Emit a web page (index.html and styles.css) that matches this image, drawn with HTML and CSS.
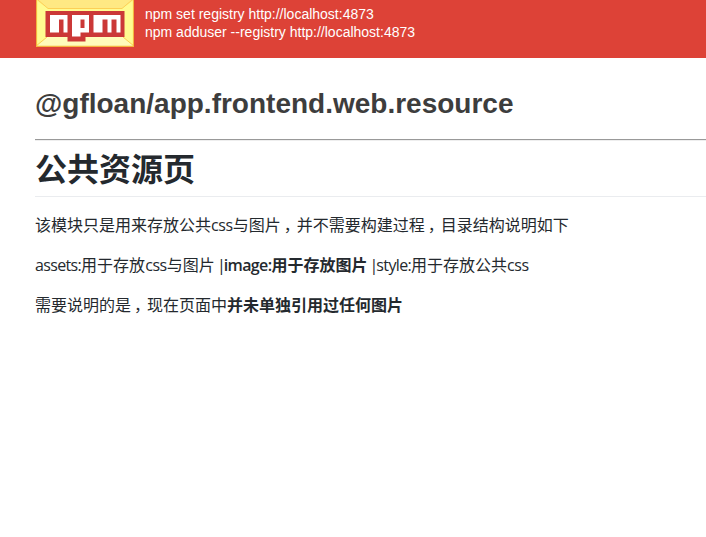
FILE: index.html
```html
<!DOCTYPE html>
<html lang="zh-CN">
<head>
<meta charset="utf-8">
<title>@gfloan/app.frontend.web.resource</title>
<link rel="stylesheet" href="styles.css">
</head>
<body>
<header class="header">
  <svg class="logo" width="98" height="47" viewBox="0 0 98 47" aria-label="npm">
    <rect width="98" height="47" fill="#fffb91"/>
    <path d="M0 0H98L86 8.500H12Z" fill="#ffe983"/>
    <path d="M11 37H87L98 47H0Z" fill="#fffcba"/>
    <path d="M2 0L12 8.500H86L96 0M11 37L0 46M87 37L98 46" fill="none" stroke="#fdd056" stroke-width="1"/>
    <path d="M.5 0V46.300H97.500V0" fill="none" stroke="#f4b53f" stroke-width="1.200"/>
    <path d="M9.500 11H88.500V37H49.500V41.500H31.500V37H9.500Z" fill="#cb3837"/>
    <path fill="#fff" fill-rule="evenodd" d="M14 15H31.500V32.500H27.500V19.500H23V32.500H14ZM36 15H53V32.500H44.500V36.500H36ZM44.500 19.500V28H48.500V19.500ZM57.500 15H84.500V32.500H80.500V19.500H75.500V32.500H71.500V19.500H66.500V32.500H57.500Z"/>
  </svg>
  <div class="commands">
    <div>npm set registry http://localhost:4873</div>
    <div>npm adduser --registry http://localhost:4873</div>
  </div>
</header>
<main class="content">
  <h1 class="package">@gfloan/app.frontend.web.resource</h1>
  <hr class="rule">
  <article class="readme">
    <h1 class="title">公共资源页</h1>
    <p>该模块只是用来存放公共<span class="latin">css</span>与图片<span class="comma">，</span>并不需要构建过程<span class="comma">，</span>目录结构说明如下</p>
    <p><span class="label">assets:</span>用于存放<span class="latin">css</span>与图片<span class="bar"> |</span><strong><span class="label">image:</span>用于存放图片</strong><span class="bar"> |</span><span class="label">style:</span>用于存放公共<span class="latin">css</span></p>
    <p>需要说明的是<span class="comma">，</span>现在页面中<strong>并未单独引用过任何图片</strong></p>
  </article>
</main>
</body>
</html>
```
FILE: styles.css
```css
body {
  margin: 0;
  background: #fff;
  overflow: hidden;
}

.header {
  display: flex;
  height: 58px;
  padding-left: 36px;
  box-sizing: border-box;
  background: #dd4237;
}

.logo {
  flex: none;
}

.commands {
  margin: 5px 0 0 11px;
  color: #fff;
  font: 14px/18px "Liberation Sans", Arial, sans-serif;
  white-space: nowrap;
}

.content {
  padding: 29px 0 0 35px;
}

.package {
  margin: 0;
  color: #3d3d3d;
  font: bold 28px/34px "Liberation Sans", Arial, sans-serif;
}

.rule {
  height: 0;
  margin: 18px 0 0;
  border: 0;
  border-top: 1px solid #999;
  border-bottom: 1px solid #eee;
}

.readme {
  color: #24292e;
  font: 16px/24px "Open Sans", "Noto Sans CJK SC", sans-serif;
  white-space: nowrap;
}

.title {
  margin: 0 0 16px;
  padding: 4px 0 3px;
  border-bottom: 1px solid #eaecef;
  font-size: 32px;
  font-weight: bold;
  line-height: 48px;
}

.readme p {
  margin: 0 0 16px;
}

.readme strong {
  font-weight: 600;
}

.latin {
  letter-spacing: -0.4px;
}

.label {
  letter-spacing: -0.65px;
}

.bar {
  letter-spacing: -2px;
}

.comma {
  margin-left: 3px;
  letter-spacing: -3px;
}
```
